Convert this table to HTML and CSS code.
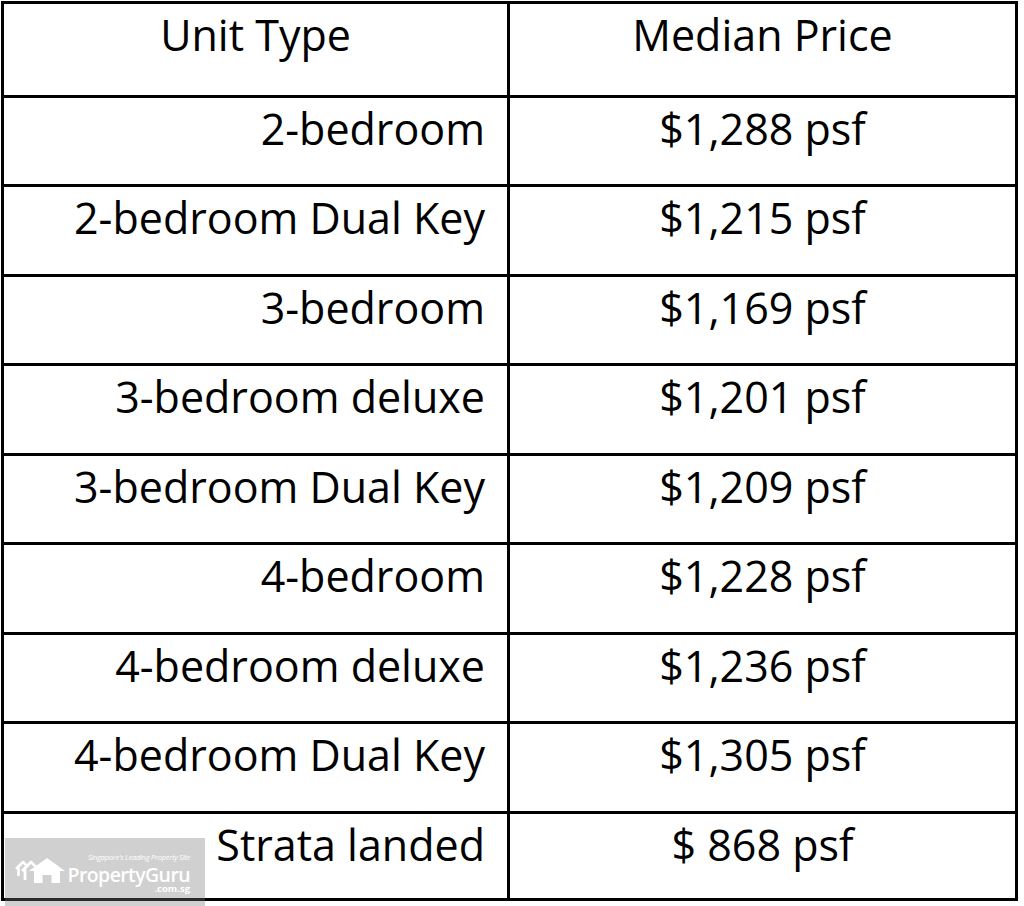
FILE: index.html
```html
<!DOCTYPE html>
<html lang="en">
<head>
<meta charset="utf-8">
<title>Median Price by Unit Type</title>
<link rel="stylesheet" href="styles.css">
</head>
<body>
<div class="sheet">
  <div class="grid">
    <div class="cell head">Unit Type</div>
    <div class="cell head">Median Price</div>
    <div class="cell type">2-bedroom</div>
    <div class="cell price">$1,288 psf</div>
    <div class="cell type">2-bedroom Dual Key</div>
    <div class="cell price">$1,215 psf</div>
    <div class="cell type">3-bedroom</div>
    <div class="cell price">$1,169 psf</div>
    <div class="cell type">3-bedroom deluxe</div>
    <div class="cell price">$1,201 psf</div>
    <div class="cell type">3-bedroom Dual Key</div>
    <div class="cell price">$1,209 psf</div>
    <div class="cell type">4-bedroom</div>
    <div class="cell price">$1,228 psf</div>
    <div class="cell type">4-bedroom deluxe</div>
    <div class="cell price">$1,236 psf</div>
    <div class="cell type">4-bedroom Dual Key</div>
    <div class="cell price">$1,305 psf</div>
    <div class="cell type">Strata landed</div>
    <div class="cell price">$ 868 psf</div>
  </div>
  <div class="watermark">
    <svg class="wm-icon" width="50" height="25" viewBox="0 0 50 25">
      <path d="M1 11 L8 4 L13 9" fill="none" stroke="#fff" stroke-width="2.6" stroke-linejoin="round"/>
      <path d="M3.5 9.5 L3.5 18" fill="none" stroke="#fff" stroke-width="2.6"/>
      <path d="M7 13 L16 4 L21 9" fill="none" stroke="#fff" stroke-width="2.8" stroke-linejoin="round"/>
      <path d="M10 11 L10 22" fill="none" stroke="#fff" stroke-width="2.8"/>
      <path d="M14 13 L32 0 L50 13 L45 13 L45 25 L36.5 25 L36.5 17 L27.5 17 L27.5 25 L19 25 L19 13 Z" fill="#fff"/>
    </svg>
    <div class="wm-text">
      <span class="wm-tag">Singapore's Leading Property Site</span>
      <span class="wm-name">PropertyGuru</span>
      <span class="wm-domain">.com.sg</span>
    </div>
  </div>
</div>
</body>
</html>
```

FILE: styles.css
```css
html, body {
  margin: 0;
  padding: 0;
  background: #fff;
}

.sheet {
  position: relative;
  width: 1024px;
  height: 906px;
  padding: 1px 0 0 1px;
  box-sizing: border-box;
  overflow: hidden;
}

.grid {
  display: grid;
  width: 1017px;
  box-sizing: border-box;
  padding: 3px;
  gap: 3px;
  background: #000;
  grid-template-columns: 503px 505px;
  grid-template-rows: 91px 86px 87px 86px 87px 86px 87px 86px 87px 84px;
}

.cell {
  background: #fff;
  color: #000;
  font-family: "Open Sans", "DejaVu Sans", sans-serif;
  font-size: 43px;
  font-weight: 500;
  line-height: 48px;
  padding-top: 7px;
  box-sizing: border-box;
  white-space: nowrap;
}

.head {
  text-align: center;
}

.type {
  text-align: right;
  padding-right: 22px;
}

.price {
  text-align: center;
}

.watermark {
  position: absolute;
  left: 5px;
  top: 838px;
  width: 200px;
  height: 68px;
  background: rgba(120, 120, 120, 0.35);
  display: flex;
  align-items: flex-start;
  gap: 3px;
  padding: 15px 15px 0 10px;
  box-sizing: border-box;
}

.wm-icon {
  flex: none;
  margin-top: 5px;
}

.wm-text {
  display: flex;
  flex-direction: column;
  align-items: flex-end;
  width: 122px;
  color: #fff;
  font-family: "Open Sans", sans-serif;
}

.wm-tag {
  font-size: 7.5px;
  line-height: 8px;
  font-style: italic;
  letter-spacing: -0.25px;
}

.wm-name {
  font-size: 19.5px;
  line-height: 16px;
  font-weight: 600;
  letter-spacing: -0.6px;
  margin-top: 6px;
}

.wm-domain {
  font-size: 9.5px;
  line-height: 9px;
  font-weight: 700;
  margin-top: 1px;
}
```
